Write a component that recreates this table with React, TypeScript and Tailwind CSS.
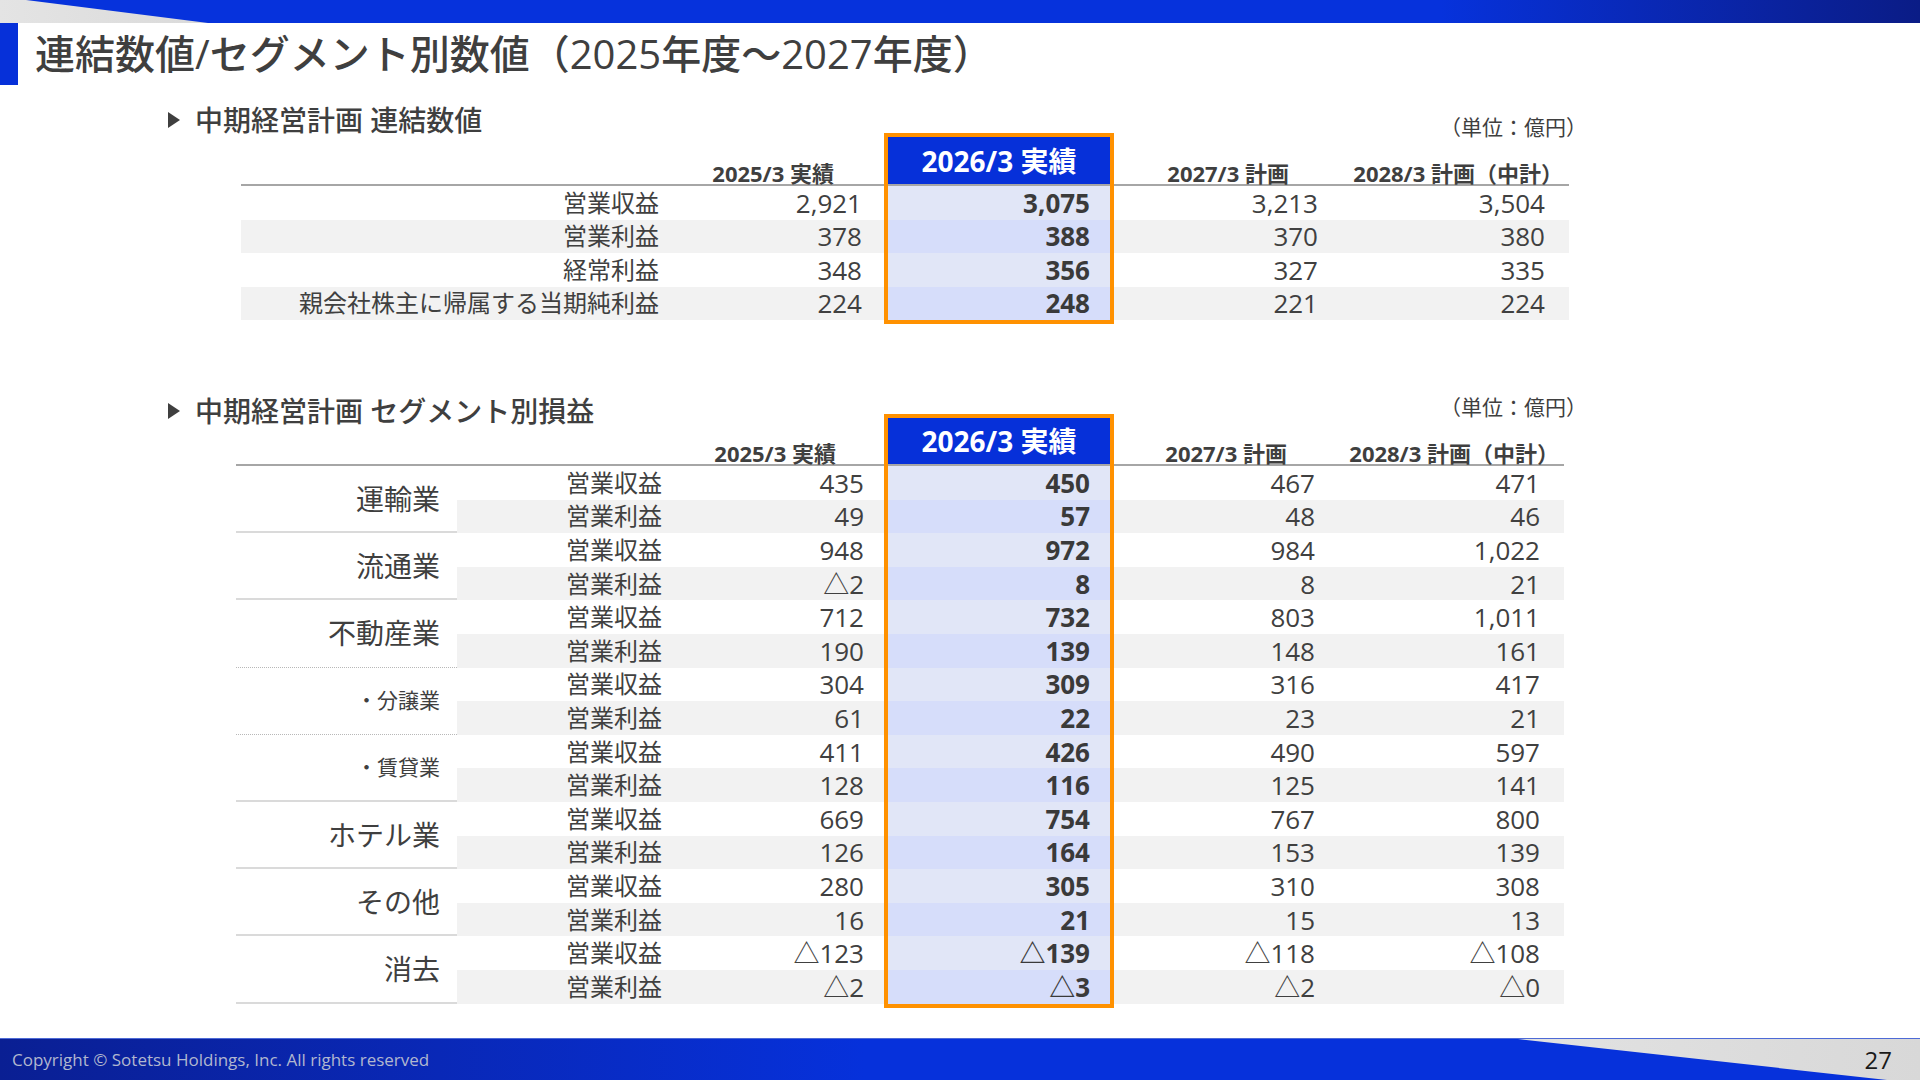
const FONT = "font-['Open_Sans','Noto_Sans_CJK_JP',sans-serif]";

type Row4 = [string, string, string, string];

const consolidated: { label: string; v: Row4 }[] = [
  { label: '営業収益', v: ['2,921', '3,075', '3,213', '3,504'] },
  { label: '営業利益', v: ['378', '388', '370', '380'] },
  { label: '経常利益', v: ['348', '356', '327', '335'] },
  { label: '親会社株主に帰属する当期純利益', v: ['224', '248', '221', '224'] },
];

const segments: { name: string; small?: boolean; dotted?: boolean; rows: [Row4, Row4] }[] = [
  { name: '運輸業', rows: [['435', '450', '467', '471'], ['49', '57', '48', '46']] },
  { name: '流通業', rows: [['948', '972', '984', '1,022'], ['△2', '8', '8', '21']] },
  { name: '不動産業', dotted: true, rows: [['712', '732', '803', '1,011'], ['190', '139', '148', '161']] },
  { name: '・分譲業', small: true, dotted: true, rows: [['304', '309', '316', '417'], ['61', '22', '23', '21']] },
  { name: '・賃貸業', small: true, rows: [['411', '426', '490', '597'], ['128', '116', '125', '141']] },
  { name: 'ホテル業', rows: [['669', '754', '767', '800'], ['126', '164', '153', '139']] },
  { name: 'その他', rows: [['280', '305', '310', '308'], ['16', '21', '15', '13']] },
  { name: '消去', rows: [['△123', '△139', '△118', '△108'], ['△2', '△3', '△2', '△0']] },
];

const segRows = segments.flatMap((s) => s.rows);
const segLabels = segments.flatMap(() => ['営業収益', '営業利益']);

function Bullet() {
  return (
    <svg width="12" height="16" viewBox="0 0 12 16" className="shrink-0">
      <polygon points="0,0 12,8 0,16" fill="#3f3f3f" />
    </svg>
  );
}

function SectionHeading({ title, unitClass }: { title: string; unitClass: string }) {
  return (
    <div className="ml-[168px] w-[1419px] h-[26px] flex items-start justify-between">
      <div className="h-[26px] flex items-center gap-[15px]">
        <Bullet />
        <span className="text-[28px] leading-[26px] font-medium text-[#3f3f3f]">{title}</span>
      </div>
      <span className={`${unitClass} text-[21px] leading-[21px] text-[#3f3f3f]`}>（単位：億円）</span>
    </div>
  );
}

// one plain numeric column: header text + values
function NumCol({
  header,
  values,
  width,
  headerH,
  headerPad,
  valuePad,
  rowH,
  stripe,
}: {
  header: string;
  values: string[];
  width: string;
  headerH: string;
  headerPad: string;
  valuePad: string;
  rowH: string;
  stripe: (i: number) => boolean;
}) {
  return (
    <div className={width}>
      <div className={`${headerH} ${headerPad} border-b-2 border-[#a6a6a6] flex items-end justify-end`}>
        <span className="text-[22px] leading-[22px] font-bold text-[#3f3f3f] whitespace-nowrap">{header}</span>
      </div>
      {values.map((v, i) => (
        <div
          key={i}
          className={`${rowH} ${valuePad} flex items-center justify-end text-[26px] leading-none text-[#404040] ${
            stripe(i) ? 'bg-[#f2f2f2]' : ''
          }`}
        >
          {v}
        </div>
      ))}
    </div>
  );
}

function HighlightCol({ values, blueH, rowH }: { values: string[]; blueH: string; rowH: string }) {
  return (
    <div className="w-[230px] border-4 border-[#ff9100]">
      <div
        className={`${blueH} bg-[#0630d9] border-b-2 border-[#a6a6a6] flex items-center justify-center text-[28px] leading-none font-bold text-white whitespace-nowrap`}
      >
        2026/3 実績
      </div>
      {values.map((v, i) => (
        <div
          key={i}
          className={`${rowH} pr-[20px] flex items-center justify-end text-[26px] leading-none font-bold text-[#3a3a3a] ${
            i % 2 ? 'bg-[#d6ddfa]' : 'bg-[#e1e6f7]'
          }`}
        >
          {v}
        </div>
      ))}
    </div>
  );
}

function ConsolidatedTable() {
  const odd = (i: number) => i % 2 === 1;
  return (
    <div className="ml-[241px] flex items-start">
      <div className="w-[418px]">
        <div className="h-[53px] border-b-2 border-[#a6a6a6]" />
        {consolidated.map((r, i) => (
          <div
            key={r.label}
            className={`h-[33.5px] flex items-center justify-end text-[24px] leading-none text-[#404040] ${
              odd(i) ? 'bg-[#f2f2f2]' : ''
            }`}
          >
            {r.label}
          </div>
        ))}
      </div>
      <NumCol
        header="2025/3 実績"
        values={consolidated.map((r) => r.v[0])}
        width="w-[225px]"
        headerH="h-[53px]"
        headerPad="pr-[50px]"
        valuePad="pr-[22px]"
        rowH="h-[33.5px]"
        stripe={odd}
      />
      <HighlightCol values={consolidated.map((r) => r.v[1])} blueH="h-[49px]" rowH="h-[33.5px]" />
      <NumCol
        header="2027/3 計画"
        values={consolidated.map((r) => r.v[2])}
        width="w-[226px]"
        headerH="h-[53px]"
        headerPad="pr-[51px]"
        valuePad="pr-[22px]"
        rowH="h-[33.5px]"
        stripe={odd}
      />
      <NumCol
        header="2028/3 計画（中計）"
        values={consolidated.map((r) => r.v[3])}
        width="w-[229px]"
        headerH="h-[53px]"
        headerPad="pr-[6px]"
        valuePad="pr-[24px]"
        rowH="h-[33.5px]"
        stripe={odd}
      />
    </div>
  );
}

function SegmentTable() {
  const odd = (i: number) => i % 2 === 1;
  return (
    <div className="ml-[236px] -mt-[10px] flex items-start">
      <div className="w-[221px]">
        <div className="h-[52px] border-b-2 border-[#a6a6a6]" />
        {segments.map((s) => (
          <div
            key={s.name}
            className={`h-[67.2px] pr-[17px] flex items-center justify-end text-[#3f3f3f] ${
              s.dotted ? 'border-b border-dotted border-[#b8b8b8]' : 'border-b-2 border-[#dadada]'
            } ${s.small ? 'text-[21px] leading-none' : 'text-[28px] leading-none'}`}
          >
            {s.name}
          </div>
        ))}
      </div>
      <div className="w-[223px]">
        <div className="h-[52px] border-b-2 border-[#a6a6a6]" />
        {segLabels.map((l, i) => (
          <div
            key={i}
            className={`h-[33.6px] pl-[109px] flex items-center text-[24px] leading-none text-[#404040] ${
              odd(i) ? 'bg-[#f2f2f2]' : ''
            }`}
          >
            {l}
          </div>
        ))}
      </div>
      <NumCol
        header="2025/3 実績"
        values={segRows.map((r) => r[0])}
        width="w-[204px]"
        headerH="h-[52px]"
        headerPad="pr-[48px]"
        valuePad="pr-[20px]"
        rowH="h-[33.6px]"
        stripe={odd}
      />
      <HighlightCol values={segRows.map((r) => r[1])} blueH="h-[48px]" rowH="h-[33.6px]" />
      <NumCol
        header="2027/3 計画"
        values={segRows.map((r) => r[2])}
        width="w-[226px]"
        headerH="h-[52px]"
        headerPad="pr-[53px]"
        valuePad="pr-[25px]"
        rowH="h-[33.6px]"
        stripe={odd}
      />
      <NumCol
        header="2028/3 計画（中計）"
        values={segRows.map((r) => r[3])}
        width="w-[224px]"
        headerH="h-[52px]"
        headerPad="pr-[5px]"
        valuePad="pr-[24px]"
        rowH="h-[33.6px]"
        stripe={odd}
      />
    </div>
  );
}

export default function App() {
  return (
    <div className={`${FONT} w-[1920px] h-[1080px] bg-white flex flex-col overflow-hidden`}>
      {/* top band */}
      <div className="relative h-[23px] shrink-0 bg-linear-to-r from-[#0632dc] from-75% to-[#0a1c86]">
        <svg className="absolute left-0 top-0" width="210" height="23" viewBox="0 0 210 23">
          <defs>
            <linearGradient id="tw" x1="0" y1="0" x2="1" y2="0">
              <stop offset="0" stopColor="#e4e4e4" />
              <stop offset="1" stopColor="#dadada" />
            </linearGradient>
          </defs>
          <polygon points="0,0 26,0 208,23 0,23" fill="url(#tw)" />
        </svg>
      </div>

      {/* title */}
      <div className="h-[62px] shrink-0 flex items-center">
        <div className="w-[18px] h-full bg-[#0630d9]" />
        <h1 className="pl-[17px] text-[40px] leading-none font-medium text-[#3f3f3f] whitespace-nowrap">
          連結数値/セグメント別数値（2025年度～2027年度）
        </h1>
      </div>

      <div className="mt-[22px]">
        <SectionHeading title="中期経営計画 連結数値" unitClass="mt-[10px]" />
      </div>
      <ConsolidatedTable />

      <div className="mt-[74px]">
        <SectionHeading title="中期経営計画 セグメント別損益" unitClass="-mt-[1px]" />
      </div>
      <SegmentTable />

      {/* footer */}
      <div className="relative mt-auto h-[42px] shrink-0 border-t border-[#4d6ad6] bg-linear-to-r from-[#0a1f93] to-[#0631db] to-45% flex items-center justify-between">
        <svg className="absolute right-0 top-0" width="402" height="42" viewBox="0 0 402 42">
          <defs>
            <linearGradient id="fw" x1="0" y1="0" x2="1" y2="0">
              <stop offset="0" stopColor="#e2e2e2" />
              <stop offset="1" stopColor="#d8d8d8" />
            </linearGradient>
          </defs>
          <polygon points="0,0 402,0 402,42 378,42" fill="url(#fw)" />
        </svg>
        <span className="pl-[12px] text-[17px] leading-none text-[#b1b7cf]">
          Copyright © Sotetsu Holdings, Inc. All rights reserved
        </span>
        <span className="relative pr-[28px] text-[24px] leading-none text-[#1a1a1a]">27</span>
      </div>
    </div>
  );
}
